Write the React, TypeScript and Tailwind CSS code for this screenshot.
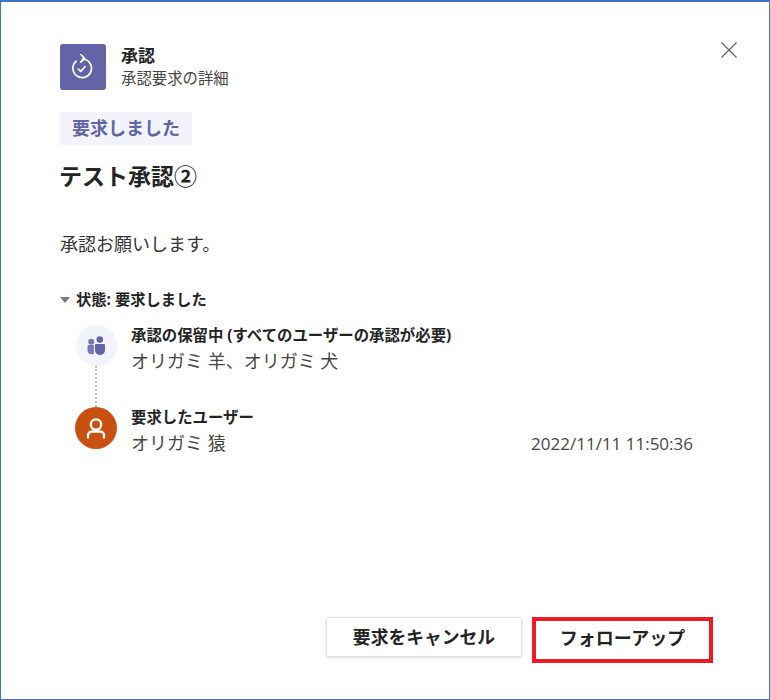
const FONT = "font-['Open_Sans','Noto_Sans_CJK_JP',sans-serif]";

function ApprovalIcon() {
  return (
    <svg width="24" height="26" viewBox="0 0 24 26" fill="none" stroke="white" strokeWidth="1.700" strokeLinecap="round" strokeLinejoin="round">
      <path d="M5.200 7.200A9.300 9.300 0 1 0 11.500 5" />
      <path d="M9.700 0.500l4 4-4 3.500" />
      <path d="M7.300 15l2.400 2.300 4.300-4.600" />
    </svg>
  );
}

function TeamIcon() {
  return (
    <svg width="19" height="19" viewBox="0 0 19 19" fill="#6264a7">
      <circle cx="4.200" cy="5.800" r="3" fill="#7476b5" />
      <circle cx="12.800" cy="3.600" r="3.300" />
      <path d="M0.500 10a1 1 0 0 1 1-1h5.400v8.800a3 3 0 0 1-1.900.5A4.500 4.500 0 0 1 0.500 14z" fill="#7476b5" />
      <path d="M8 9a1 1 0 0 1 1-1h8a1 1 0 0 1 1 1v5.600a4.500 4.500 0 0 1-5 4.300 4.500 4.500 0 0 1-5-4.300z" />
    </svg>
  );
}

function PersonIcon() {
  return (
    <svg width="26" height="26" viewBox="0 0 26 26" fill="none" stroke="white" strokeWidth="2.300">
      <circle cx="13" cy="9.500" r="5.200" />
      <path d="M5 22.500v-2a4 4 0 0 1 4-4h8a4 4 0 0 1 4 4v2" strokeLinecap="round" />
    </svg>
  );
}

export default function App() {
  return (
    <div className={`${FONT} w-[770px] h-[700px] bg-white border border-t-2 border-[#3f73c4] flex flex-col pl-[59px] pr-[31px] text-[#242424] overflow-hidden`}>
      <div className="flex items-start justify-between pt-[42px]">
        <div className="flex items-center">
          <div className="w-[46px] h-[46px] rounded-[3px] bg-[#6264a7] grid place-items-center">
            <ApprovalIcon />
          </div>
          <div className="ml-[15px]">
            <p className="text-[17px] font-bold leading-[24px]">承認</p>
            <p className="text-[15.400px] leading-[22px] text-[#484644]">承認要求の詳細</p>
          </div>
        </div>
        <button className="mt-[-3px] text-[#616161]">
          <svg width="18" height="18" viewBox="0 0 18 18" stroke="currentColor" strokeWidth="1.200" fill="none">
            <path d="M1.500 1.500l15 15M16.500 1.500l-15 15" />
          </svg>
        </button>
      </div>

      <div className="mt-[22px] w-[132px] h-[33px] bg-[#f3f4fb] text-[#6264a7] text-[18px] font-bold grid place-items-center">
        要求しました
      </div>
      <h1 className="mt-[13px] -ml-px text-[23px] font-bold leading-[36px]">テスト承認②</h1>
      <p className="mt-[38px] text-[18px] leading-[24px] text-[#333]">承認お願いします。</p>

      <div className="mt-[33px] flex items-center text-[15.300px] font-bold leading-[20px]">
        <span className="w-0 h-0 border-x-[5px] border-x-transparent border-t-[6px] border-t-[#7a7a7a] mr-[6px] mt-[2px]" />
        状態: 要求しました
      </div>

      <div className="mt-[16px] ml-[15px] mr-[45px]">
        <div className="flex">
          <div className="flex flex-col items-center w-[42px]">
            <div className="w-[41px] h-[41px] rounded-full bg-[#f3f4fb] grid place-items-center shrink-0">
              <TeamIcon />
            </div>
            <div className="h-[41px] border-l-2 border-dotted border-[#bdbdbd]" />
          </div>
          <div className="ml-[14px] pt-px">
            <p className="text-[15.400px] font-bold leading-[20px]">承認の保留中 (すべてのユーザーの承認が必要)</p>
            <p className="text-[18px] leading-[30px] text-[#484644]">オリガミ 羊、オリガミ 犬</p>
          </div>
        </div>
        <div className="flex">
          <div className="w-[42px] h-[42px] rounded-full bg-[#ca5010] grid place-items-center shrink-0">
            <PersonIcon />
          </div>
          <div className="ml-[14px] pt-px flex-1">
            <p className="text-[15.400px] font-bold leading-[20px]">要求したユーザー</p>
            <div className="flex items-baseline justify-between">
              <p className="text-[18px] leading-[30px] text-[#484644]">オリガミ 猿</p>
              <p className="text-[17px] leading-[30px] text-[#484644]">2022/11/11 11:50:36</p>
            </div>
          </div>
        </div>
      </div>

      <div className="mt-auto mb-[36px] flex justify-end items-start gap-[10px] mr-[26px]">
        <button className="w-[196px] h-[40px] bg-white border border-[#e1e1e1] rounded-[3px] shadow-[0_1px_3px_rgba(0,0,0,0.15)] text-[17.800px] font-bold">
          要求をキャンセル
        </button>
        <button className="w-[181px] h-[46px] -mr-px pb-[3px] bg-white border-[4px] border-[#ed1c24] text-[18px] font-bold">
          フォローアップ
        </button>
      </div>
    </div>
  );
}
